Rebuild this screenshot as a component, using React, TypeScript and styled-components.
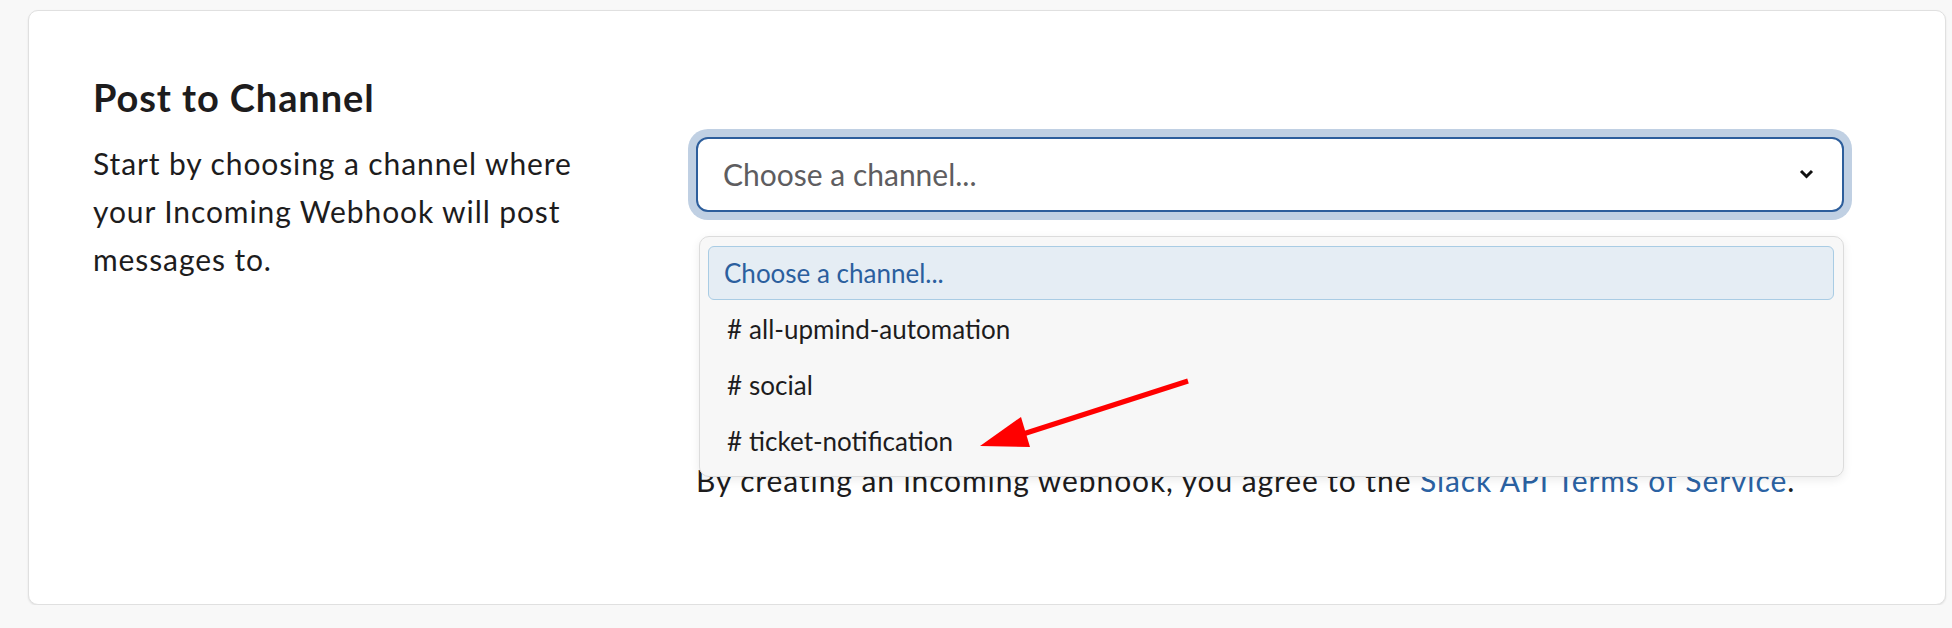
import React from 'react';
import styled, { createGlobalStyle } from 'styled-components';

const GlobalStyle = createGlobalStyle`
	html, body {
		margin: 0;
		padding: 0;
		background: #f8f8f8;
	}
	body {
		font-family: Lato, 'Open Sans', sans-serif;
		color: #1d1c1d;
	}
`;

const Page = styled.div`
	padding: 10px 6px 0 28px;
`;

const Card = styled.section`
	position: relative;
	background: #ffffff;
	border: 1px solid #e0e0e0;
	border-radius: 10px;
	box-shadow: 0 1px 2px rgba(0, 0, 0, 0.1);
	padding: 64px 101px 100px 64px;
`;

const Title = styled.h2`
	margin: 0 0 16px;
	font-size: 38px;
	line-height: 1.2;
	font-weight: 700;
	letter-spacing: 0.9px;
	color: #1d1c1d;
`;

const Row = styled.div`
	display: grid;
	grid-template-columns: 500px 1fr;
	column-gap: 103px;
	align-items: start;
`;

const Description = styled.p`
	margin: 2px 0 0;
	font-size: 30px;
	line-height: 48px;
	letter-spacing: 0.9px;
	color: #1d1c1d;
`;

const Field = styled.div`
	position: relative;
	display: flex;
	flex-direction: column;
`;

const SelectBox = styled.div`
	box-sizing: border-box;
	height: 75px;
	display: flex;
	align-items: center;
	justify-content: space-between;
	padding: 0 28px 0 25px;
	background: #ffffff;
	border: 2px solid #2d5e9c;
	border-radius: 12px;
	box-shadow: 0 0 0 8px #c0d0e3;
`;

const Placeholder = styled.span`
	font-size: 30px;
	color: #5e5d60;
`;

const OptionList = styled.ul`
	position: absolute;
	top: 99px;
	left: 3px;
	right: 0;
	margin: 0;
	padding: 9px 9px 8px 8px;
	list-style: none;
	display: flex;
	flex-direction: column;
	gap: 2px;
	background: #f7f7f7;
	border: 1px solid #dcdcdc;
	border-radius: 10px;
	box-shadow: 0 3px 10px rgba(0, 0, 0, 0.08);
	z-index: 2;
`;

const Option = styled.li<{ $active?: boolean }>`
	height: 54px;
	box-sizing: border-box;
	display: flex;
	align-items: center;
	padding: 0 15px;
	font-size: 26px;
	border: 1px solid ${({ $active }) => ($active ? '#a9cce4' : 'transparent')};
	border-radius: 6px;
	background: ${({ $active }) => ($active ? '#e5edf4' : 'transparent')};
	color: ${({ $active }) => ($active ? '#2b5f9e' : '#1d1c1d')};
`;

const Hash = styled.span`
	margin: 0 7px 0 3px;
`;

const Terms = styled.p`
	margin: 244px 0 0;
	font-size: 30px;
	line-height: 48px;
	letter-spacing: 0.9px;
	color: #1d1c1d;
`;

const TermsLink = styled.a`
	color: #2b62a3;
	text-decoration: none;
`;

const ArrowMark = styled.svg`
	position: absolute;
	left: 946px;
	top: 364px;
	z-index: 3;
	pointer-events: none;
`;

const channels = ['all-upmind-automation', 'social', 'ticket-notification'];

const App: React.FC = () => {
	return (
		<>
			<GlobalStyle />
			<Page>
				<Card>
					<Title>Post to Channel</Title>
					<Row>
						<Description>
							Start by choosing a channel where your Incoming Webhook will
							post messages to.
						</Description>
						<Field>
							<SelectBox>
								<Placeholder>Choose a channel...</Placeholder>
								<svg width="15" height="10" viewBox="0 0 15 10">
									<polyline
										points="2,2 7.5,7.5 13,2"
										fill="none"
										stroke="#111"
										strokeWidth="3"
									/>
								</svg>
							</SelectBox>
							<OptionList>
								<Option $active>Choose a channel...</Option>
								{channels.map((name) => (
									<Option key={name}>
										<Hash>#</Hash>
										{name}
									</Option>
								))}
							</OptionList>
							<Terms>
								By creating an incoming webhook, you agree to the{' '}
								<TermsLink href="#">Slack API Terms of Service</TermsLink>.
							</Terms>
						</Field>
					</Row>
					<ArrowMark width="222" height="80" viewBox="0 0 222 80">
						<line
							x1="213"
							y1="6"
							x2="45"
							y2="60"
							stroke="#ff0000"
							strokeWidth="5"
						/>
						<polygon points="5,71 46,42 55,72" fill="#ff0000" />
					</ArrowMark>
				</Card>
			</Page>
		</>
	);
};

export default App;
